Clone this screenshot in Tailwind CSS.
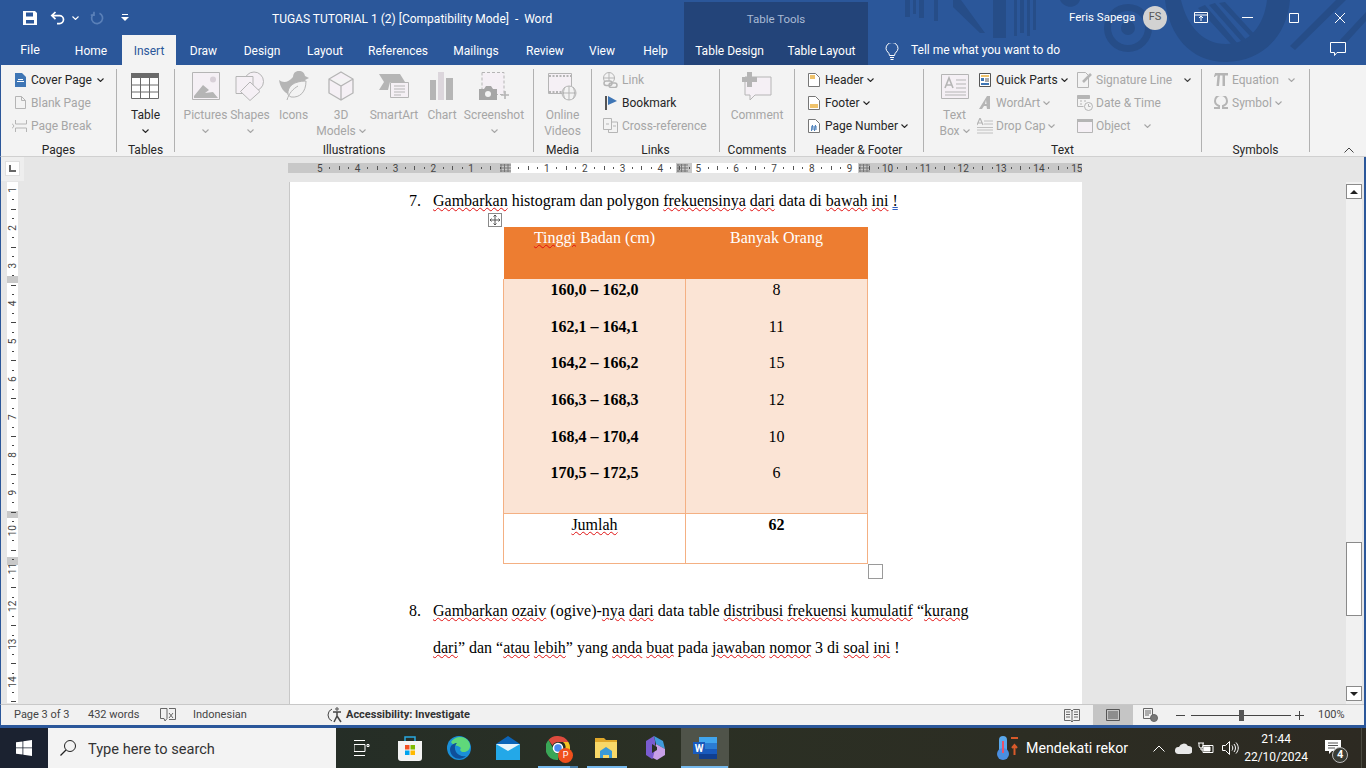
<!DOCTYPE html>
<html lang="en">
<head>
  <meta charset="UTF-8" />
  <title>TUGAS TUTORIAL 1 (2) - Word</title>
  <script src="https://cdn.jsdelivr.net/npm/@tailwindcss/browser@4"></script>
</head>
<body class="w-[1366px] h-[768px] overflow-hidden bg-[#2b579a] font-['Roboto',sans-serif] text-[12px] text-[#262626]">
  <svg class="hidden">
    <symbol id="chev" viewBox="0 0 7 4"><path d="M.5.5 3.5 3.5 6.5.5" fill="none" stroke="currentColor" stroke-width="1.1"/></symbol>
  </svg>

  <!-- title bar + tabs -->
  <div class="relative h-[65px] bg-[#2b579a] text-white overflow-hidden">
    <svg class="absolute left-0 top-0" width="1366" height="65" fill="#264d88">
      <path d="M905 0h5v17h-5zM913 0h3v14h-3zM919 0h5v18h-5zM934 0h4v21h-4zM953 0h8l24 33h-5l-27-26zM993 0h13v38h-13zM1014 0h3v36h-3zM1020 0h4v33h-4zM1027 0h3v36h-3zM1033 0h3v30h-3zM1060 0h20c-3 9-16 9-20 0z"/>
      <path fill-rule="evenodd" d="M1128 4a24 24 0 1 1 0 48 24 24 0 0 1 0-48zm0 7a17 17 0 1 0 0 34 17 17 0 0 0 0-34zm0 10a7 7 0 1 1 0 14 7 7 0 0 1 0-14z"/>
      <path d="M1165 0h16c6 26 22 44 45 44s38-18 41-44h23c-3 36-28 62-64 62s-57-27-61-62z"/>
      <path d="M1205 5 1238 44h-7L1198 8zM1215 3 1248 42h-6L1209 5zM1225 2 1256 36h-6L1219 3z"/>
      <path d="M1290 46 1336 0h10l-51 50zM1340 40 1366 12v9l-21 23z"/>
    </svg>
    <div class="relative flex items-center h-[35px]">
      <div class="flex items-center w-[272px] pl-[22px]">
        <svg width="16" height="16" viewBox="0 0 16 16"><path fill="#fff" fill-rule="evenodd" d="M1 1h12l2 2v12H1zM4 2.500v4h7v-4zM4 10v3.600h8V10z"/></svg>
        <svg class="ml-[12px]" width="16" height="14" viewBox="0 0 16 14" fill="none" stroke="#fff" stroke-width="1.7"><path d="M5.500 1 1.800 4.600 5.500 8.200M2 4.600h7.500a4 4 0 0 1 0 8H7"/></svg>
        <svg class="ml-[6px] w-[7px] h-[4px] text-white"><use href="#chev"/></svg>
        <svg class="ml-[11px]" width="14" height="14" viewBox="0 0 14 14" fill="none" stroke="#5a80b8" stroke-width="1.7"><path d="M9.500 2.200A5.500 5.500 0 1 1 4 2.600M4 .8v3.400H.8"/></svg>
        <svg class="ml-[17px]" width="8" height="8" viewBox="0 0 8 8" fill="#fff"><path d="M1 0h6v1H1zM0 3h8L4 7z"/></svg>
      </div>
      <div class="w-[412px] whitespace-pre text-[12px] pt-[3px]">TUGAS TUTORIAL 1 (2) [Compatibility Mode]  -  Word</div>
      <div class="w-[385px]"></div>
      <div class="w-[74px] text-[11.5px] pt-[1px]">Feris Sapega</div>
      <div class="w-[24px] h-[24px] rounded-full bg-[#d2d2d2] text-[#555] flex items-center justify-center text-[11px]">FS</div>
      <svg class="ml-[27px]" width="14" height="11" viewBox="0 0 14 11" fill="none" stroke="#fff"><path d="M.5.5h13v10H.5zM.5 3h13M7 9V4.200M5 6l2-2 2 2"/></svg>
      <svg class="ml-[34px]" width="11" height="1" viewBox="0 0 11 1"><path d="M0 .5h11" stroke="#fff"/></svg>
      <svg class="ml-[36px]" width="10" height="10" viewBox="0 0 10 10" fill="none" stroke="#fff"><path d="M.5.5h9v9h-9z"/></svg>
      <svg class="ml-[36px]" width="10" height="10" viewBox="0 0 10 10" fill="none" stroke="#fff"><path d="M0 0l10 10M10 0 0 10"/></svg>
    </div>
    <div class="relative flex h-[30px] leading-[32px] text-center">
      <div class="w-[60px] text-[12.5px] leading-[30px]">File</div>
      <div class="w-[62px]">Home</div>
      <div class="w-[54px] bg-[#f3f3f3] text-[#2b579a]">Insert</div>
      <div class="w-[55px]">Draw</div>
      <div class="w-[62px]">Design</div>
      <div class="w-[64px]">Layout</div>
      <div class="w-[82px]">References</div>
      <div class="w-[74px]">Mailings</div>
      <div class="w-[64px]">Review</div>
      <div class="w-[50px]">View</div>
      <div class="w-[57px]">Help</div>
      <div class="w-[91px] bg-[#234479]">Table Design</div>
      <div class="w-[93px] bg-[#234479]">Table Layout</div>
      <svg class="ml-[17px] mt-[8px]" width="14" height="17" viewBox="0 0 14 17" fill="none" stroke="#fff"><path d="M4.500 12.500C4.500 9.500 1 8.500 1 5.500a6 6 0 0 1 12 0c0 3-3.500 4-3.500 7zM5 14.500h4M5.500 16.500h3"/></svg>
      <div class="ml-[12px] leading-[30px]">Tell me what you want to do</div>
      <svg class="ml-[270px] mt-[7px]" width="16" height="15" viewBox="0 0 16 15" fill="none" stroke="#fff"><path d="M.5.5h15v10H7l-2.500 3v-3H.5z"/></svg>
    </div>
    <div class="absolute left-[684px] top-[2px] w-[184px] h-[33px] bg-[#234479] text-center leading-[34px] text-[#a9bad4] text-[11.5px]">Table Tools</div>
  </div>

  <!-- ribbon -->
  <div class="flex h-[92px] bg-[#f3f3f3] border-b border-b-[#d0d0d0] border-l border-l-[#2b579a] text-[12px]">
    <!-- Pages -->
    <div class="w-[115px] flex flex-col">
      <div class="h-[72px] shrink-0 pt-[3px] pl-[14px]">
        <div class="flex items-center h-[23px] gap-[5px]">
          <svg width="11" height="14" viewBox="0 0 11 14"><path fill="#3f76b5" d="M0 0h7l4 4v10H0z"/><path fill="#fff" d="M2 8h7v1H2zM3 6h5v1H3z"/></svg>
          <span>Cover Page</span><svg class="w-[7px] h-[4px]"><use href="#chev"/></svg>
        </div>
        <div class="flex items-center h-[23px] gap-[5px] text-[#a6a6a6]">
          <svg width="11" height="13" viewBox="0 0 11 13" fill="none" stroke="#b5b5b5"><path d="M.5.5h6l4 4v8H.5zM6.500.5v4h4"/></svg>
          <span>Blank Page</span>
        </div>
        <div class="flex items-center h-[23px] gap-[3px] -ml-[3px] text-[#a6a6a6]">
          <svg width="16" height="12" viewBox="0 0 16 12" fill="none" stroke="#b5b5b5"><path d="M3.500 0v4h11V0M3.500 12V8h11v4M0 3.500 2 6 0 8.500"/></svg>
          <span>Page Break</span>
        </div>
      </div>
      <div class="text-center leading-[16px] mt-[5px]">Pages</div>
    </div>
    <div class="w-px my-[4px] bg-[#b1b1b1]"></div>
    <!-- Tables -->
    <div class="w-[57px] flex flex-col items-center">
      <div class="h-[72px] shrink-0 pt-[4px] flex flex-col items-center">
        <div class="h-[38px] shrink-0 flex items-center pb-[4px]">
          <svg width="28" height="26" viewBox="0 0 28 26"><path fill="#fff" d="M0 0h28v26H0z"/><path fill="#6a6a6a" d="M0 0h28v5H0z"/><path fill="none" stroke="#6a6a6a" d="M.5.5h27v25H.5zM0 12h28M0 19h28M9.500 5v21M18.500 5v21"/></svg>
        </div>
        <div class="leading-[16px]">Table</div>
        <svg class="mt-[6px] w-[7px] h-[4px]"><use href="#chev"/></svg>
      </div>
      <div class="leading-[16px] mt-[5px]">Tables</div>
    </div>
    <div class="w-px my-[4px] bg-[#b1b1b1]"></div>
    <!-- Illustrations -->
    <div class="w-[358px] flex flex-col">
      <div class="h-[72px] shrink-0 pt-[4px] pl-[8px] flex text-[#a6a6a6] text-center">
        <div class="w-[45px] flex flex-col items-center">
          <div class="h-[38px] shrink-0 flex items-center pb-[4px]"><svg width="28" height="28" viewBox="0 0 28 28"><path fill="#f5f0f5" stroke="#b5b5b5" d="M.5.5h27v27H.5z"/><circle cx="21" cy="7.500" r="3" fill="#d8d0d8"/><path fill="#b5b5b5" d="M2 24 11 13l6 5-4 3 8-1 5 6H2z"/></svg></div>
          <div class="leading-[16px]">Pictures</div>
          <svg class="mt-[6px] w-[7px] h-[4px]"><use href="#chev"/></svg>
        </div>
        <div class="w-[44px] flex flex-col items-center">
          <div class="h-[38px] shrink-0 flex items-center pb-[4px]"><svg width="30" height="30" viewBox="0 0 30 30" fill="none" stroke="#b5b5b5"><circle cx="19" cy="10.500" r="9.500" fill="#f5f0f5"/><path fill="#f5f0f5" d="M1 5.500h17v17H1z"/><path fill="#f5f0f5" d="M15 11l10 9.500-10 9-9.500-9z"/></svg></div>
          <div class="leading-[16px]">Shapes</div>
          <svg class="mt-[6px] w-[7px] h-[4px]"><use href="#chev"/></svg>
        </div>
        <div class="w-[43px] flex flex-col items-center">
          <div class="h-[38px] shrink-0 flex items-center pb-[4px]"><svg width="30" height="30" viewBox="0 0 30 30"><path fill="#b5b5b5" d="M14 6c0-8 11-8 12-1l4 2-4 2c0 4-3 6-5 7l-10 8C5 22 1 16 0 9c4 3 9 3 14-3z"/><path fill="#f3f3f3" stroke="#b5b5b5" d="M9 24c-1-9 6-14 18-14 0 11-6 17-15 16zM8 29c2-7 6-11 11-14"/></svg></div>
          <div class="leading-[16px]">Icons</div>
        </div>
        <div class="w-[52px] flex flex-col items-center">
          <div class="h-[38px] shrink-0 flex items-center pb-[4px]"><svg width="26" height="30" viewBox="0 0 26 30" fill="#f5f0f5" stroke="#b5b5b5" stroke-width="1.3"><path d="M13 1l12 7v14l-12 7-12-7V8zM1 8l12 7 12-7M13 15v14"/></svg></div>
          <div class="leading-[16px]">3D</div>
          <div class="leading-[16px] flex items-center gap-[3px]">Models<svg class="w-[7px] h-[4px]"><use href="#chev"/></svg></div>
        </div>
        <div class="w-[54px] flex flex-col items-center">
          <div class="h-[38px] shrink-0 flex items-center pb-[4px]"><svg width="30" height="26" viewBox="0 0 30 26"><path fill="#b5b5b5" d="M0 1h21l5 8H11l-2 8H0l5-8z"/><path fill="#f5f0f5" stroke="#b5b5b5" d="M11.500 9.500h18v15h-18z"/><path stroke="#b5b5b5" d="M15 13h11M15 16h11M15 19h11M15 22h7"/></svg></div>
          <div class="leading-[16px]">SmartArt</div>
        </div>
        <div class="w-[42px] flex flex-col items-center">
          <div class="h-[38px] shrink-0 flex items-center pb-[4px]"><svg width="24" height="28" viewBox="0 0 24 28"><path fill="#b5b5b5" d="M0 8h6v20H0zM16 6h7v22h-7z"/><path fill="#dcd6dc" d="M8 0h6v28H8z"/></svg></div>
          <div class="leading-[16px]">Chart</div>
        </div>
        <div class="w-[62px] flex flex-col items-center">
          <div class="h-[38px] shrink-0 flex items-center pb-[4px]"><svg width="30" height="28" viewBox="0 0 30 28"><path fill="#f5f0f5" stroke="#b5b5b5" stroke-dasharray="3 2" d="M3 .5h22v22H3z"/><path fill="#a6a6a6" d="M0 17h5l2-3h5l2 3h4v11H0z"/><circle cx="9" cy="22" r="3" fill="#f3f3f3"/><path stroke="#b5b5b5" stroke-width="1.6" d="M22 23h8M26 19v8"/></svg></div>
          <div class="leading-[16px]">Screenshot</div>
          <svg class="mt-[6px] w-[7px] h-[4px]"><use href="#chev"/></svg>
        </div>
      </div>
      <div class="text-center leading-[16px] mt-[5px]">Illustrations</div>
    </div>
    <div class="w-px my-[4px] bg-[#b1b1b1]"></div>
    <!-- Media -->
    <div class="w-[57px] flex flex-col items-center">
      <div class="h-[72px] shrink-0 pt-[4px] flex flex-col items-center text-[#a6a6a6]">
        <div class="h-[38px] shrink-0 flex items-center pb-[4px]"><svg width="30" height="30" viewBox="0 0 30 30" fill="none" stroke="#b5b5b5"><path fill="#f5f0f5" d="M1.500 2.500h23v20h-23z"/><path stroke-width="2" stroke-dasharray="2 1.500" d="M2 5h22M2 21h22"/><circle cx="22" cy="22" r="7" fill="#f3f3f3"/><path d="M15 22h14M22 15v14M18 16c-2 4-2 8 0 12M26 16c2 4 2 8 0 12"/></svg></div>
        <div class="leading-[16px]">Online</div>
        <div class="leading-[16px]">Videos</div>
      </div>
      <div class="leading-[16px] mt-[5px]">Media</div>
    </div>
    <div class="w-px my-[4px] bg-[#b1b1b1]"></div>
    <!-- Links -->
    <div class="w-[127px] flex flex-col">
      <div class="h-[72px] shrink-0 pt-[3px] pl-[11px]">
        <div class="flex items-center h-[23px] gap-[4px] text-[#a6a6a6]">
          <svg width="15" height="16" viewBox="0 0 15 16" fill="none" stroke="#b5b5b5"><circle cx="6" cy="6" r="5.500"/><path d="M.5 6h11M6 .5v11"/><rect x="1" y="9" width="8" height="4.500" rx="2.200" stroke-width="1.500" fill="#f3f3f3"/><rect x="6" y="11" width="8" height="4.500" rx="2.200" stroke-width="1.500"/></svg>
          <span>Link</span>
        </div>
        <div class="flex items-center h-[23px] gap-[4px]">
          <svg class="ml-[2px]" width="13" height="14" viewBox="0 0 13 14"><path fill="#555" d="M0 0h2v14H0z"/><path fill="#3f76b5" d="M3 0l9 5-9 4z"/></svg>
          <span>Bookmark</span>
        </div>
        <div class="flex items-center h-[23px] gap-[4px] text-[#a6a6a6]">
          <svg width="15" height="15" viewBox="0 0 15 15" fill="none" stroke="#b5b5b5"><path d="M.5.5h8v11h-8zM8.500 4h6v10.500h-9V11.500M3 6h3M10 8h3"/></svg>
          <span>Cross-reference</span>
        </div>
      </div>
      <div class="text-center leading-[16px] mt-[5px]">Links</div>
    </div>
    <div class="w-px my-[4px] bg-[#b1b1b1]"></div>
    <!-- Comments -->
    <div class="w-[74px] flex flex-col items-center">
      <div class="h-[72px] shrink-0 pt-[4px] flex flex-col items-center text-[#a6a6a6]">
        <div class="h-[38px] shrink-0 flex items-center pb-[4px]"><svg width="30" height="29" viewBox="0 0 30 29"><path fill="#f5f0f5" stroke="#b5b5b5" d="M3 5h26v18H13l-5 5v-5H3z"/><path fill="#b5b5b5" d="M5 0h5v5h5v5h-5v5H5v-5H0V5h5z"/></svg></div>
        <div class="leading-[16px]">Comment</div>
      </div>
      <div class="leading-[16px] mt-[5px]">Comments</div>
    </div>
    <div class="w-px my-[4px] bg-[#b1b1b1]"></div>
    <!-- Header & Footer -->
    <div class="w-[128px] flex flex-col">
      <div class="h-[72px] shrink-0 pt-[3px] pl-[13px]">
        <div class="flex items-center h-[23px] gap-[5px]">
          <svg width="12" height="14" viewBox="0 0 12 14"><path fill="#fff" stroke="#777" d="M.5.5h7l4 4v9H.5z"/><path fill="#efc26b" d="M2 2h5v4H2z"/></svg>
          <span>Header</span><svg class="-ml-[2px] w-[7px] h-[4px]"><use href="#chev"/></svg>
        </div>
        <div class="flex items-center h-[23px] gap-[5px]">
          <svg width="12" height="14" viewBox="0 0 12 14"><path fill="#fff" stroke="#777" d="M.5.5h7l4 4v9H.5z"/><path fill="#efc26b" d="M2 8h8v4H2z"/></svg>
          <span>Footer</span><svg class="-ml-[2px] w-[7px] h-[4px]"><use href="#chev"/></svg>
        </div>
        <div class="flex items-center h-[23px] gap-[5px]">
          <svg width="12" height="14" viewBox="0 0 12 14"><path fill="#fff" stroke="#777" d="M.5.5h7l4 4v9H.5z"/><path stroke="#3f76b5" d="M4.500 6l-1 6M7.500 6l-1 6M3 8h6M3 10h6"/></svg>
          <span>Page Number</span><svg class="-ml-[2px] w-[7px] h-[4px]"><use href="#chev"/></svg>
        </div>
      </div>
      <div class="text-center leading-[16px] mt-[5px]">Header &amp; Footer</div>
    </div>
    <div class="w-px my-[4px] bg-[#b1b1b1]"></div>
    <!-- Text -->
    <div class="w-[277px] flex flex-col">
      <div class="h-[72px] shrink-0 pt-[4px] flex">
        <div class="w-[55px] pl-[6px] flex flex-col items-center text-[#a6a6a6]">
          <div class="h-[38px] shrink-0 flex items-center pb-[4px]"><svg width="28" height="25" viewBox="0 0 28 25" fill="#f5f0f5" stroke="#b5b5b5"><path d="M.5.5h27v24H.5z"/><path fill="none" d="M15 6h10M15 10h10M15 14h10M4 18h21M4 21h21"/><path fill="none" stroke-width="1.600" d="M4 14 8 4l4 10M5.500 11h5"/></svg></div>
          <div class="leading-[16px]">Text</div>
          <div class="leading-[16px] flex items-center gap-[3px]">Box<svg class="w-[7px] h-[4px]"><use href="#chev"/></svg></div>
        </div>
        <div class="w-[98px] -mt-[1px]">
          <div class="flex items-center h-[23px] gap-[5px]">
            <svg width="12" height="14" viewBox="0 0 12 14"><path fill="#fff" stroke="#555" d="M.5.5h11v13H.5z"/><path fill="#efc26b" d="M2 2h8v2H2z"/><path fill="#3f76b5" d="M2 5h3v3H2zM2 10h8v2H2z"/><path stroke="#555" d="M6 6h4M6 8h4"/></svg>
            <span>Quick Parts</span><svg class="-ml-[2px] w-[7px] h-[4px]"><use href="#chev"/></svg>
          </div>
          <div class="flex items-center h-[23px] gap-[5px] text-[#a6a6a6]">
            <svg width="12" height="13" viewBox="0 0 12 13"><path fill="#b5b5b5" d="M8 0h3v13H8l-.5-3H5l-2 3H0zM7 4 6 8h1.500z"/></svg>
            <span>WordArt</span><svg class="-ml-[2px] w-[7px] h-[4px]"><use href="#chev"/></svg>
          </div>
          <div class="flex items-center h-[23px] gap-[3px] -ml-[2px] text-[#a6a6a6]">
            <svg width="16" height="16" viewBox="0 0 16 16" fill="none" stroke="#c0c0c0"><path d="M7 3h9M7 6h9M0 9.500h16M0 12h16M0 15h16"/><path stroke="#b5b5b5" stroke-width="1.200" d="M0 7 3 0l3 7M1 5h4"/></svg>
            <span>Drop Cap</span><svg class="w-[7px] h-[4px]"><use href="#chev"/></svg>
          </div>
        </div>
        <div class="w-[124px] -mt-[1px]">
          <div class="flex items-center h-[23px] gap-[3px] text-[#a6a6a6]">
            <svg width="16" height="16" viewBox="0 0 16 16" fill="none" stroke="#b5b5b5"><path d="M.5.5h8l3 3v12H.5z"/><path stroke-width="2.500" d="M6 10 14 2"/></svg>
            <span class="w-[85px]">Signature Line</span><svg class="text-[#404040] w-[7px] h-[4px]"><use href="#chev"/></svg>
          </div>
          <div class="flex items-center h-[23px] gap-[3px] text-[#a6a6a6]">
            <svg width="16" height="16" viewBox="0 0 16 16" fill="none" stroke="#b5b5b5"><path fill="#b5b5b5" d="M.5.5h12v3H.5z"/><path d="M.5 3.500v8h6M3 6h2M7 6h2M3 9h2"/><circle cx="11.500" cy="11.500" r="4" fill="#f3f3f3"/><path d="M11.500 9v2.500h2"/></svg>
            <span>Date &amp; Time</span>
          </div>
          <div class="flex items-center h-[23px] gap-[3px] text-[#a6a6a6]">
            <svg width="16" height="14" viewBox="0 0 16 14"><path fill="#f5f0f5" stroke="#b5b5b5" d="M.5.5h15v13H.5z"/><path fill="#b5b5b5" d="M0 0h16v3H0z"/></svg>
            <span class="w-[45px]">Object</span><svg class="w-[7px] h-[4px]"><use href="#chev"/></svg>
          </div>
        </div>
      </div>
      <div class="text-center leading-[16px] mt-[5px]">Text</div>
    </div>
    <div class="w-px my-[4px] bg-[#b1b1b1]"></div>
    <!-- Symbols -->
    <div class="w-[107px] flex flex-col">
      <div class="h-[72px] shrink-0 pt-[3px] pl-[12px] text-[#a6a6a6]">
        <div class="flex items-center h-[23px]">
          <svg width="14" height="13" viewBox="0 0 14 13" fill="#b5b5b5"><path d="M1 0h13v2.500h-3V13H8.500V2.500H6L5 13H2.500L3.500 2.500C2 2.500 1.500 3 1 4H0C.3 1.500 1 1 1 0z"/></svg>
          <span class="ml-[4px] w-[56px]">Equation</span><svg class="w-[7px] h-[4px]"><use href="#chev"/></svg>
        </div>
        <div class="flex items-center h-[23px]">
          <svg width="14" height="13" viewBox="0 0 14 13" fill="none" stroke="#b5b5b5" stroke-width="2"><path d="M0 12h5V10C2.500 9 1 7.500 1 5a6 6 0 0 1 12 0c0 2.500-1.500 4-4 5v2h5"/></svg>
          <span class="ml-[4px]">Symbol</span><svg class="ml-[3px] w-[7px] h-[4px]"><use href="#chev"/></svg>
        </div>
      </div>
      <div class="text-center leading-[16px] mt-[5px]">Symbols</div>
    </div>
    <div class="w-px my-[4px] bg-[#b1b1b1]"></div>
    <div class="flex-1 flex justify-end items-end pr-[12px] pb-[3px]">
      <svg width="10" height="6" viewBox="0 0 10 6" fill="none" stroke="#444"><path d="M.5 5.500 5 1l4.500 4.500"/></svg>
    </div>
  </div>

  <!-- editing area -->
  <div class="h-[547px] bg-[#e6e6e6] border-l border-l-[#2b579a] flex flex-col mr-[2px]">
    <div class="h-[25px] flex">
      <div class="w-[23px] h-[24px] bg-[#eeeeee] pt-[4px] pl-[4px]">
        <div class="w-[15px] h-[15px] bg-white border border-[#e0e0e0] flex items-center justify-center">
          <svg width="7" height="7" viewBox="0 0 7 7"><path fill="#666" d="M0 0h2v5h5v2H0z"/></svg>
        </div>
      </div>
      <svg id="hruler" class="ml-[264px] mt-[6px] font-['Roboto',sans-serif]" width="794" height="10"></svg>
    </div>
    <div class="flex h-[522px]">
      <svg id="vruler" class="ml-[5px] font-['Roboto',sans-serif]" width="12" height="521"></svg>
      <div class="w-[271px]"></div>
      <!-- page -->
      <div class="relative w-[793px] h-[522px] bg-white border-l border-l-[#c8c8c8] overflow-hidden font-['Liberation_Serif',serif] text-[16px] text-black">
        <div class="flex pl-[119px] pt-[8px] h-[45px] leading-[22px]">
          <span class="w-[24px]">7.</span>
          <p><span class="underline decoration-wavy decoration-[#e01010] decoration-1">Gambarkan</span> histogram dan polygon <span class="underline decoration-wavy decoration-[#e01010] decoration-1">frekuensinya</span> <span class="underline decoration-wavy decoration-[#e01010] decoration-1">dari</span> data di <span class="underline decoration-wavy decoration-[#e01010] decoration-1">bawah</span> <span class="underline decoration-wavy decoration-[#e01010] decoration-1">ini</span> <span class="underline decoration-double decoration-[#2f5fc0] decoration-1">!</span></p>
        </div>
        <div class="absolute left-[198px] top-[31px] w-[14px] h-[14px] bg-white border border-[#8a8a8a] flex items-center justify-center">
          <svg width="10" height="10" viewBox="0 0 10 10" fill="none" stroke="#555"><path d="M5 0v10M0 5h10M3.500 1.500 5 0l1.500 1.500M3.500 8.500 5 10l1.500-1.500M1.500 3.500 0 5l1.500 1.500M8.500 3.500 10 5 8.500 6.500"/></svg>
        </div>
        <table class="ml-[213px] w-[365px] table-fixed border-collapse leading-[22px] text-center">
          <tbody>
            <tr class="h-[52px] bg-[#ed7d31] text-white align-top">
              <td class="w-[182px]"><span class="underline decoration-wavy decoration-[#e01010] decoration-1">Tinggi</span> Badan (cm)</td>
              <td>Banyak Orang</td>
            </tr>
            <tr class="h-[234px] bg-[#fbe4d5] align-top">
              <td class="border-l border-r border-[#f4b083] font-bold">
                <div class="h-[36.7px]">160,0 – 162,0</div>
                <div class="h-[36.7px]">162,1 – 164,1</div>
                <div class="h-[36.7px]">164,2 – 166,2</div>
                <div class="h-[36.7px]">166,3 – 168,3</div>
                <div class="h-[36.7px]">168,4 – 170,4</div>
                <div class="h-[36.7px]">170,5 – 172,5</div>
              </td>
              <td class="border-l border-r border-[#f4b083]">
                <div class="h-[36.7px]">8</div>
                <div class="h-[36.7px]">11</div>
                <div class="h-[36.7px]">15</div>
                <div class="h-[36.7px]">12</div>
                <div class="h-[36.7px]">10</div>
                <div class="h-[36.7px]">6</div>
              </td>
            </tr>
            <tr class="h-[50px] align-top">
              <td class="border border-[#f4b083]"><span class="underline decoration-wavy decoration-[#e01010] decoration-1">Jumlah</span></td>
              <td class="border border-[#f4b083] font-bold">62</td>
            </tr>
          </tbody>
        </table>
        <div class="absolute left-[578px] top-[382px] w-[15px] h-[15px] bg-white border border-[#9a9a9a]"></div>
        <div class="flex pl-[119px] pt-[36px] leading-[22px]">
          <span class="w-[24px]">8.</span>
          <div>
            <p class="h-[37px]"><span class="underline decoration-wavy decoration-[#e01010] decoration-1">Gambarkan</span> <span class="underline decoration-wavy decoration-[#e01010] decoration-1">ozaiv</span> (ogive)-<span class="underline decoration-wavy decoration-[#e01010] decoration-1">nya</span> <span class="underline decoration-wavy decoration-[#e01010] decoration-1">dari</span> data table <span class="underline decoration-wavy decoration-[#e01010] decoration-1">distribusi</span> <span class="underline decoration-wavy decoration-[#e01010] decoration-1">frekuensi</span> <span class="underline decoration-wavy decoration-[#e01010] decoration-1">kumulatif</span> “<span class="underline decoration-wavy decoration-[#e01010] decoration-1">kurang</span></p>
            <p><span class="underline decoration-wavy decoration-[#e01010] decoration-1">dari</span>” dan “<span class="underline decoration-wavy decoration-[#e01010] decoration-1">atau</span> <span class="underline decoration-wavy decoration-[#e01010] decoration-1">lebih</span>” yang <span class="underline decoration-wavy decoration-[#e01010] decoration-1">anda</span> <span class="underline decoration-wavy decoration-[#e01010] decoration-1">buat</span> pada <span class="underline decoration-wavy decoration-[#e01010] decoration-1">jawaban</span> <span class="underline decoration-wavy decoration-[#e01010] decoration-1">nomor</span> 3 di <span class="underline decoration-wavy decoration-[#e01010] decoration-1">soal</span> <span class="underline decoration-wavy decoration-[#e01010] decoration-1">ini</span> !</p>
          </div>
        </div>
      </div>
      <div class="w-[264px]"></div>
      <!-- scrollbar -->
      <div class="w-[16px] h-[522px] bg-[#f1f1f1] flex flex-col pt-[2px] pb-[3px]">
        <div class="h-[15px] bg-white border border-[#8a8a8a] flex items-center justify-center"><svg width="8" height="4" viewBox="0 0 8 4"><path fill="#222" d="M4 0l4 4H0z"/></svg></div>
        <div class="h-[343px]"></div>
        <div class="h-[74px] bg-white border border-[#8a8a8a]"></div>
        <div class="flex-1"></div>
        <div class="h-[15px] bg-white border border-[#8a8a8a] flex items-center justify-center"><svg width="8" height="4" viewBox="0 0 8 4"><path fill="#222" d="M0 0h8L4 4z"/></svg></div>
      </div>
    </div>
  </div>

  <!-- status bar -->
  <div class="h-[21px] mr-[2px] bg-[#f1f1f1] border-t border-t-[#c8c8c8] border-l border-l-[#2b579a] flex items-center text-[11px] text-[#444]">
    <span class="ml-[13px] w-[74px]">Page 3 of 3</span>
    <span class="w-[72px]">432 words</span>
    <svg width="16" height="14" viewBox="0 0 16 14" fill="none" stroke="#666"><path d="M.5.5h6.500v10L5 13l-1-2.500H.5zM9 5l4 5M13 5l-4 5M9 .5h6.500v11H9"/></svg>
    <span class="ml-[17px] w-[134px]">Indonesian</span>
    <svg width="16" height="16" viewBox="0 0 16 16" fill="none" stroke="#444"><path d="M5 2A6.500 6.500 0 0 0 5 14"/><path stroke-width="1.500" d="M6 5h8M10 5v4l-3 6M10 9l4 6"/><circle cx="10" cy="2" r="1.200"/></svg>
    <span class="ml-[3px] font-bold text-[#333]">Accessibility: Investigate</span>
    <svg class="ml-[594px]" width="16" height="14" viewBox="0 0 16 14" fill="none" stroke="#666"><path d="M.5 1.500h6L8 3l1.500-1.500h6v11h-6L8 14l-1.500-1.500h-6zM8 3v10M2 4h4M2 6.500h4M2 9h4M10 4h4M10 6.500h4M10 9h4"/></svg>
    <div class="ml-[13px] w-[40px] h-[20px] bg-[#c5c5c5] flex items-center justify-center">
      <svg width="14" height="12" viewBox="0 0 14 12" fill="none" stroke="#555"><path d="M.5.5h13v11H.5zM2 3h10M2 5h10M2 7h10M2 9h10"/></svg>
    </div>
    <svg class="ml-[10px]" width="15" height="14" viewBox="0 0 15 14" fill="none" stroke="#666"><path d="M.5.5h9v10h-9zM2 3h6M2 5h6M2 7h4"/><circle cx="11" cy="10" r="3.500" fill="#777"/></svg>
    <svg class="ml-[18px]" width="9" height="1" viewBox="0 0 9 1"><path d="M0 .5h9" stroke="#444"/></svg>
    <div class="relative ml-[6px] w-[100px] h-px bg-[#444]"><div class="absolute left-[48px] -top-[5px] w-[5px] h-[11px] bg-[#555]"></div></div>
    <svg class="ml-[4px]" width="9" height="9" viewBox="0 0 9 9"><path d="M0 4.500h9M4.500 0v9" stroke="#444"/></svg>
    <span class="ml-[14px]">100%</span>
  </div>
  <div class="h-[3px] bg-[#2b579a]"></div>

  <!-- taskbar -->
  <div class="relative h-[40px] bg-gradient-to-r from-[#1f2b28] via-[#2b3024] to-[#2d2a22] flex items-center text-white text-[14px]">
    <div class="w-[48px] h-[40px] bg-[#1b2230] flex items-center justify-center">
      <svg width="16" height="16" viewBox="0 0 16 16" fill="#fff"><path d="M0 2.300 6.500 1.400v6.100H0zM7.300 1.300 16 0v7.500H7.300zM0 8.300h6.500v6.200L0 13.700zM7.300 8.300H16V16l-8.700-1.200z"/></svg>
    </div>
    <div class="w-[288px] h-[40px] bg-[#f3f3f3] text-[#333] flex items-center pl-[12px] text-[14.6px]">
      <svg width="16" height="16" viewBox="0 0 16 16" fill="none" stroke="#222"><circle cx="10" cy="6" r="5.500"/><path d="M6 10 .5 15.500" stroke-width="1.300"/></svg>
      <span class="ml-[12px] pt-[3px]">Type here to search</span>
    </div>
    <svg class="ml-[18px]" width="16" height="16" viewBox="0 0 16 16" fill="none" stroke="#fff"><path d="M0 .5h11M0 15.500h11M0 4.500h11v7H0zM13 4.500h2v2h-2z"/></svg>
    <svg class="ml-[28px]" width="24" height="26" viewBox="0 0 24 26"><path fill="none" stroke="#29a8e0" stroke-width="1.500" d="M7 7V2h10v5"/><path fill="#f3f3f3" d="M0 6h24v17a3 3 0 0 1-3 3H3a3 3 0 0 1-3-3z"/><path fill="#f25022" d="M7 10h4.500v4.500H7z"/><path fill="#7fba00" d="M12.500 10H17v4.500h-4.500z"/><path fill="#00a4ef" d="M7 15.500h4.500V20H7z"/><path fill="#ffb900" d="M12.500 15.500H17V20h-4.500z"/></svg>
    <svg class="ml-[25px]" width="24" height="24" viewBox="0 0 24 24"><circle cx="12" cy="12" r="12" fill="#1a8fd8"/><path fill="#5fd87a" d="M4 6c4-6 14-7 18 0 3 6-1 10-5 10-3 0-5-2-3-4-3-3-8-2-10-6z"/><path fill="#0f4f9a" d="M3 14c0-5 4-7 7-7-2 2-3 5-1 9 2 3 6 5 10 4-5 5-15 3-16-6z"/></svg>
    <svg class="ml-[25px]" width="24" height="24" viewBox="0 0 24 24"><path fill="#0c64b8" d="M0 8 12 0l12 8v3H0z"/><path fill="#23a8e8" d="M0 8h24v16H0z"/><path fill="#e8f4fb" d="M0 8h24L12 15z"/></svg>
    <div class="relative ml-[26px] w-[24px] h-[24px]">
      <svg width="24" height="24" viewBox="0 0 24 24"><path fill="#dd4b3e" d="M12 0a12 12 0 0 1 10.400 6H12a6 6 0 0 0-5.500 3.500L2.500 4A12 12 0 0 1 12 0z"/><path fill="#f5c022" d="M22.400 6A12 12 0 0 1 13 24l5-9a6 6 0 0 0-1-9z"/><path fill="#3aa757" d="M2.500 4 7 12a6 6 0 0 0 6 6l-1 6A12 12 0 0 1 2.500 4z"/><circle cx="12" cy="12" r="4.500" fill="#4a8af0" stroke="#fff" stroke-width="1.500"/></svg>
      <div class="absolute -right-[3px] -bottom-[3px] w-[15px] h-[15px] rounded-full bg-[#f0501c] text-white text-[9px] leading-[15px] text-center">P</div>
    </div>
    <svg class="ml-[25px]" width="22" height="20" viewBox="0 0 22 20"><path fill="#e0a82a" d="M0 0h9l2 2h11v18H0z"/><path fill="#f8d868" d="M0 4h22v16H0z"/><path fill="#3a9ad8" d="M5 13l6-4 6 4v7h-3v-3H8v3H5z"/></svg>
    <svg class="ml-[27px]" width="21" height="24" viewBox="0 0 21 24"><path fill="#7a5cd0" d="M10 0 2 5v14l6 4 3-2V5z"/><path fill="#3f9bdc" d="M10 0l9 5 2 8-9-5z"/><path fill="#c8a0e8" d="M21 13v6l-8 5-4-2 3-14z"/><path fill="#2b3024" d="M8 8l5 3v3l-5 3z"/></svg>
    <div class="ml-[16px] w-[48px] h-[40px] bg-[#4f5349] flex items-center justify-center">
      <svg width="24" height="22" viewBox="0 0 24 22"><path fill="#41a5ee" d="M6 0h18v6H6z"/><path fill="#2b7cd3" d="M6 6h18v6H6z"/><path fill="#185abd" d="M6 12h18v5H6z"/><path fill="#103f91" d="M6 17h18v5H6z"/><path fill="#185abd" d="M0 5h12v12H0z"/><text x="6" y="15" text-anchor="middle" font-size="10" font-weight="700" fill="#fff" font-family="Roboto">W</text></svg>
    </div>
    <svg class="ml-[267px]" width="22" height="24" viewBox="0 0 22 24"><rect x="3" y="0" width="8" height="18" rx="4" fill="#5aa8ec"/><circle cx="7" cy="18" r="6" fill="#4a8ee0"/><path stroke="#e8506a" stroke-width="2" d="M7 5v12"/><path stroke="#d85a2a" stroke-width="2" d="M15 2h7M18.500 9v10M16 12l2.500-3 2.500 3"/></svg>
    <span class="ml-[8px] pt-[1px] text-[14.2px]">Mendekati rekor</span>
    <svg class="ml-[25px]" width="12" height="7" viewBox="0 0 12 7" fill="none" stroke="#fff"><path d="M.5 6.500 6 1l5.500 5.500"/></svg>
    <svg class="ml-[10px]" width="17" height="11" viewBox="0 0 17 11" fill="#e8e8e8"><path d="M4 4a5 5 0 0 1 9-1 4 4 0 0 1 1 8H3a3 3 0 0 1 1-7z"/></svg>
    <svg class="ml-[6px]" width="16" height="12" viewBox="0 0 16 12" fill="none" stroke="#fff"><path d="M1 1v3a2 2 0 0 0 4 0V1M3 6v2h2M0 1h6M5 3.500h10v7H5z"/><path fill="#fff" d="M6 5h6v4H6z"/></svg>
    <svg class="ml-[8px]" width="17" height="14" viewBox="0 0 17 14" fill="none" stroke="#fff"><path d="M.5 4.500h3l4-4v13l-4-4h-3zM10 4.500c1 1.500 1 3.500 0 5M12 3c2 2.500 2 5.500 0 8M14 1.500c3 3.500 3 7.500 0 11"/></svg>
    <div class="ml-[1px] w-[72px] text-center text-[12px] leading-[18px]"><div>21:44</div><div>22/10/2024</div></div>
    <div class="relative ml-[13px]">
      <svg width="17" height="16" viewBox="0 0 17 16"><path fill="#fff" d="M0 0h16v11H7l-3 3v-3H0z"/><path stroke="#555" d="M3 3h10M3 5.500h10M3 8h7"/></svg>
      <div class="absolute left-[7px] top-[7px] w-[16px] h-[16px] rounded-full bg-[#3a3c34] border border-[#bbb] text-[11px] leading-[14px] text-center font-bold">4</div>
    </div>
    <div class="absolute left-[1361px] top-0 w-px h-[40px] bg-[#4a4a40]"></div>
    <div class="absolute left-[538px] bottom-0 w-[32px] h-[2px] bg-[#76b9ed]"></div>
    <div class="absolute left-[570px] bottom-0 w-[8px] h-[2px] bg-[#4a7ea8]"></div>
    <div class="absolute left-[587px] bottom-0 w-[40px] h-[2px] bg-[#76b9ed]"></div>
    <div class="absolute left-[681px] bottom-0 w-[47px] h-[2px] bg-[#76b9ed]"></div>
  </div>

  <script>
    var NS = 'http://www.w3.org/2000/svg';
    function add(svg, tag, attrs, txt){
      var el = document.createElementNS(NS, tag);
      for (var k in attrs) el.setAttribute(k, attrs[k]);
      if (txt) el.textContent = txt;
      svg.appendChild(el);
    }
    var h = document.getElementById('hruler'), STEP = 37.85, ZERO = 221;
    add(h, 'rect', {x:0, y:0, width:794, height:10, fill:'#c8c8c8'});
    add(h, 'rect', {x:223, y:0, width:165, height:10, fill:'#fff'});
    add(h, 'rect', {x:404, y:0, width:166, height:10, fill:'#fff'});
    [212, 389, 571].forEach(function(x){
      for (var i = 0; i < 3; i++) {
        add(h, 'path', {d:'M'+(x+1+i*3.5)+' 1v8', stroke:'#777', 'stroke-width':1, fill:'none'});
        add(h, 'path', {d:'M'+x+' '+(2+i*3)+'h11', stroke:'#777', 'stroke-width':1, fill:'none'});
      }
    });
    for (var n = -5; n <= 15; n++) {
      var cx = ZERO + n*STEP;
      if (n !== 0) add(h, 'text', {x:cx, y:9, 'text-anchor':'middle', 'font-size':10, fill:'#444'}, String(Math.abs(n)));
      [0.25, 0.75].forEach(function(f){ add(h, 'rect', {x:Math.round(cx+f*STEP), y:4, width:1, height:2, fill:'#555'}); });
      add(h, 'rect', {x:Math.round(cx+0.5*STEP), y:3, width:1, height:4, fill:'#555'});
    }
    var v = document.getElementById('vruler');
    add(v, 'rect', {x:1, y:0, width:11, height:521, fill:'#fff'});
    [[94,7],[329,7],[375,8]].forEach(function(b){ add(v, 'rect', {x:1, y:b[0], width:11, height:b[1], fill:'#c8c8c8'}); });
    for (var m = 1; m <= 14; m++) {
      var cy = 8 + (m-1)*37.85;
      add(v, 'text', {x:0, y:0, transform:'translate(10 '+cy+') rotate(-90)', 'text-anchor':'middle', 'font-size':10, fill:'#444'}, String(m));
      [0.25, 0.75].forEach(function(f){ add(v, 'rect', {x:6, y:Math.round(cy+f*37.85), width:2, height:1, fill:'#444'}); });
      add(v, 'rect', {x:5, y:Math.round(cy+0.5*37.85), width:5, height:1, fill:'#444'});
    }
  </script>
</body>
</html>
